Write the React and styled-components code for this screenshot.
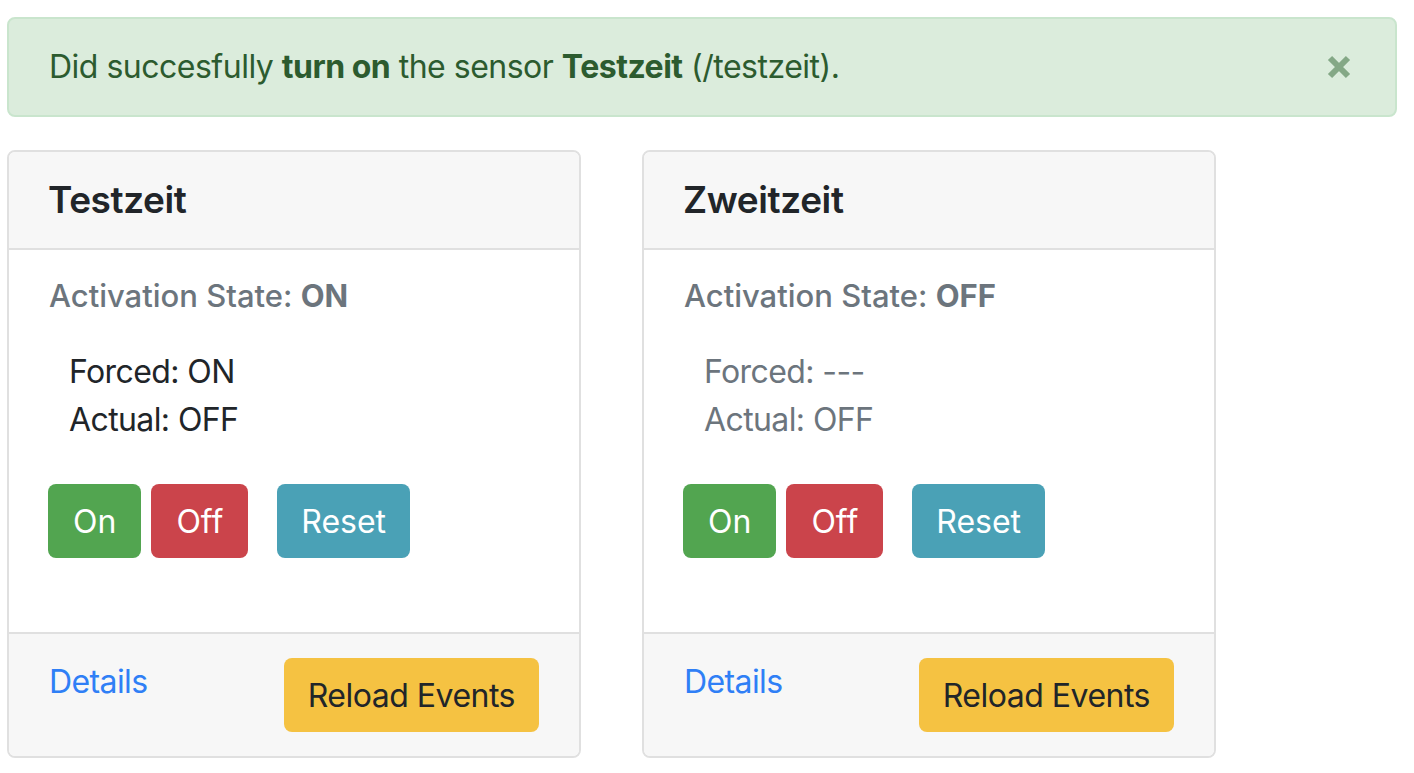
import React from 'react';
import styled, { createGlobalStyle } from 'styled-components';

const GlobalStyle = createGlobalStyle`
  html, body {
    margin: 0;
    padding: 0;
    background: #fff;
  }
  body {
    font-family: Inter, "Liberation Sans", sans-serif;
    font-size: 32px;
    line-height: 48px;
    color: #212529;
  }
`

const Page = styled.div`
  padding: 17px 17px 0 7px;
`

const Alert = styled.div`
  position: relative;
  box-sizing: border-box;
  height: 100px;
  padding: 24px 40px;
  margin-bottom: 33px;
  background: #dbecdc;
  border: 2px solid #c9e5cd;
  border-radius: 8px;
  color: #2c5b2f;
  letter-spacing: -0.5px;

  b {
    font-weight: 700;
  }
`

const Close = styled.button`
  position: absolute;
  top: 0;
  right: 0;
  height: 100%;
  padding: 0 44px 0 40px;
  border: 0;
  background: transparent;
  display: flex;
  align-items: center;
  cursor: pointer;
`

const Cards = styled.div`
  display: flex;
  gap: 61px;
  align-items: flex-start;
`

const Card = styled.div`
  box-sizing: border-box;
  width: 574px;
  border: 2px solid #e0e0e0;
  border-radius: 8px;
  overflow: hidden;
  background: #fff;
`

const CardHeader = styled.div`
  height: 96px;
  padding: 0 40px 0 39px;
  display: flex;
  align-items: center;
  background: #f7f7f7;
  border-bottom: 2px solid #e0e0e0;
  font-size: 37px;
  font-weight: 600;
  letter-spacing: -0.4px;
  color: #212529;
`

const CardBody = styled.div`
  height: 382px;
  box-sizing: border-box;
  padding: 27px 40px 0;
`

const StateLine = styled.div`
  font-size: 31px;
  line-height: 38px;
  font-weight: 500;
  color: #6c757d;

  b {
    font-weight: 700;
  }
`

const Values = styled.div`
  margin: 33px 0 40px 20px;
  letter-spacing: -0.6px;
  color: ${p => (p.$muted ? '#6c757d' : '#212529')};
`

const ButtonRow = styled.div`
  display: flex;
  margin-left: -1px;
`

const Button = styled.button`
  box-sizing: border-box;
  height: 74px;
  padding: 0 ${p => p.$pad || 24}px;
  margin-right: ${p => p.$gap || 0}px;
  border: 0;
  border-radius: 8px;
  font-family: inherit;
  font-size: 32px;
  letter-spacing: ${p => p.$dark ? '-0.5px' : '0'};
  color: ${p => p.$dark ? '#212529' : '#fff'};
  background: ${p => p.$bg};
  cursor: pointer;
`

const CardFooter = styled.div`
  height: 124px;
  box-sizing: border-box;
  padding: 24px 40px;
  background: #f7f7f7;
  border-top: 2px solid #e0e0e0;
  display: flex;
  justify-content: space-between;
  align-items: flex-start;
`

const DetailsLink = styled.a`
  color: #2f7ff6;
  text-decoration: none;
  letter-spacing: -0.6px;
  cursor: pointer;
`

const CloseIcon = () => (
  <svg width="24" height="24" viewBox="0 0 24 24">
    <path d="M3 3 L21 21 M21 3 L3 21" stroke="#84a886" strokeWidth="6" />
  </svg>
);

const SensorCard = ({ name, state, forced, actual, muted }) => (
  <Card>
    <CardHeader>{name}</CardHeader>
    <CardBody>
      <StateLine>Activation State: <b>{state}</b></StateLine>
      <Values $muted={muted}>
        <div>Forced: {forced}</div>
        <div>Actual: {actual}</div>
      </Values>
      <ButtonRow>
        <Button $bg="#52a550" $gap={10} $pad={25}>On</Button>
        <Button $bg="#cb444b" $gap={29} $pad={25}>Off</Button>
        <Button $bg="#4aa1b6" $pad={24}>Reset</Button>
      </ButtonRow>
    </CardBody>
    <CardFooter>
      <DetailsLink>Details</DetailsLink>
      <Button $bg="#f5c242" $dark>Reload Events</Button>
    </CardFooter>
  </Card>
);

const App = () => {
  return (
    <Page>
      <GlobalStyle />
      <Alert>
        Did succesfully <b>turn on</b> the sensor <b>Testzeit</b> (/testzeit).
        <Close aria-label="Close"><CloseIcon /></Close>
      </Alert>
      <Cards>
        <SensorCard name="Testzeit" state="ON" forced="ON" actual="OFF" />
        <SensorCard name="Zweitzeit" state="OFF" forced="---" actual="OFF" muted />
      </Cards>
    </Page>
  );
};

export default App;
